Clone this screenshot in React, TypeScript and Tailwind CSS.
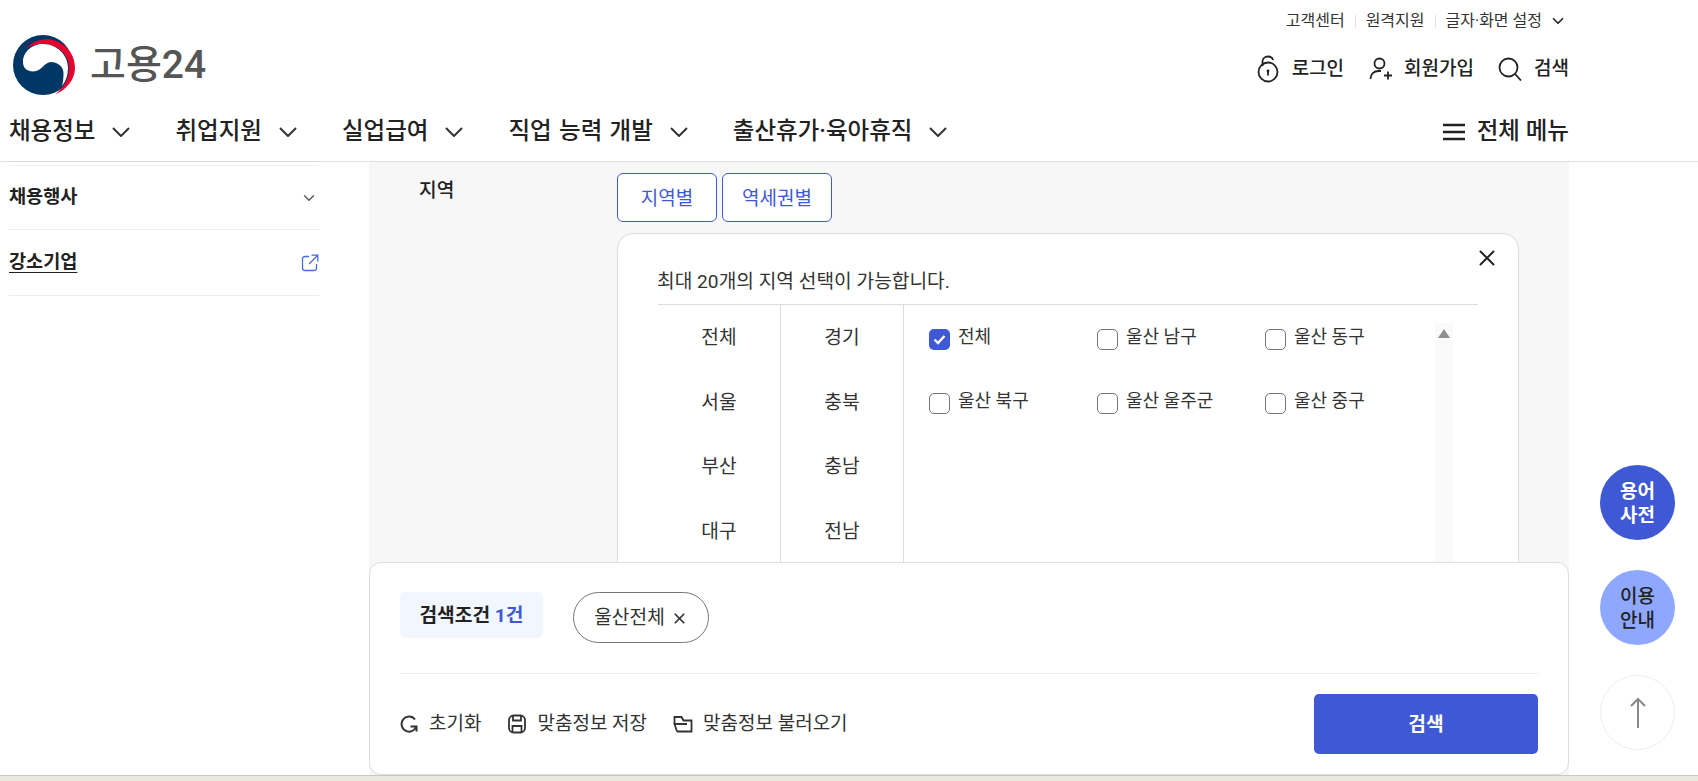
import { ChevronDown, X } from 'lucide-react';

const navItems = ['채용정보', '취업지원', '실업급여', '직업 능력 개발', '출산휴가·육아휴직'];

const regionCols = [
  ['전체', '서울', '부산', '대구'],
  ['경기', '충북', '충남', '전남'],
];

const regionChecks = [
  ['전체', '울산 남구', '울산 동구'],
  ['울산 북구', '울산 울주군', '울산 중구'],
];

const Logo = () => (
  <svg width="63" height="60" viewBox="0 0 63 60">
    <circle cx="30" cy="30" r="30" fill="#003764" />
    <path
      d="M11 16C17 8 26 4 34 4C50 5 62 17 62 33C62 45 53 55 42 59.5C52 52 56 42 56 33C56 20 45 9 30 9C22 9 15 11 11 16Z"
      fill="#e4032e"
    />
    <path
      d="M10 27C10 16 20 9 30 9C44 9 55 20 55 33C55 40 53 46 49 51C50 47 50.5 43 50.5 38C50.5 31 44 27 38 27C31 27 30 36 20 36.5C14 36.5 10 33 10 27Z"
      fill="#fff"
    />
  </svg>
);

const Checkbox = ({ checked }: { checked: boolean }) =>
  checked ? (
    <span className="flex h-[21px] w-[21px] shrink-0 items-center justify-center rounded-[5px] bg-[#3f59d4]">
      <svg width="13" height="11" viewBox="0 0 13 11" fill="none" stroke="#fff" strokeWidth="2.4">
        <path d="M1.5 5.5L5 9L11.5 2" />
      </svg>
    </span>
  ) : (
    <span className="h-[21px] w-[21px] shrink-0 rounded-[5px] border border-[#777] bg-white" />
  );

const App = () => {
  return (
    <div className="relative h-[781px] w-full overflow-hidden bg-white font-['Roboto','Noto_Sans_CJK_KR',sans-serif] text-[#222]">
      <header className="h-[162px] border-b border-[#ddd]">
        <div className="flex h-[161px] w-[1569px] flex-col">
          <div className="flex h-[42px] items-center justify-end text-[16px] leading-none text-[#333]">
            <span>고객센터</span>
            <span className="mx-[10px] h-[13px] w-px bg-[#e2e2e2]" />
            <span>원격지원</span>
            <span className="mx-[10px] h-[13px] w-px bg-[#e2e2e2]" />
            <span>글자·화면 설정</span>
            <ChevronDown size={18} strokeWidth={2.2} className="ml-[7px] mr-[2px] text-[#222]" />
          </div>
          <div className="flex h-[62px] items-start justify-between pl-[13px]">
            <div className="-mt-[7px] flex items-center gap-[14px]">
              <Logo />
              <span className="text-[39px] font-medium leading-none text-[#555]">고용24</span>
            </div>
            <div className="flex h-[54px] items-center text-[19px] font-medium">
              <svg width="22" height="28" viewBox="0 0 22 28" fill="none" stroke="#222" strokeWidth="1.8" className="mr-[13px]">
                <path d="M5.5 11V6.5C5.5 3.5 8 1.5 11 1.5C13.5 1.5 15.5 3 16.2 5" />
                <circle cx="11" cy="17" r="9.5" />
                <circle cx="11" cy="16" r="1.4" fill="#222" stroke="none" />
                <path d="M11 16V20.5" />
              </svg>
              <span>로그인</span>
              <svg width="24" height="24" viewBox="0 0 24 24" fill="none" stroke="#222" strokeWidth="1.8" className="ml-[25px] mr-[11px]">
                <circle cx="10.5" cy="6.5" r="5" />
                <path d="M1.5 22C1.5 17 5 14 9.5 14H12" />
                <path d="M15 18.5H23M19 14.5V22.5" />
              </svg>
              <span>회원가입</span>
              <svg width="24" height="24" viewBox="0 0 24 24" fill="none" stroke="#222" strokeWidth="1.8" className="ml-[24px] mr-[12px]">
                <circle cx="10.5" cy="10.5" r="9" />
                <path d="M17 17L23 23.5" />
              </svg>
              <span>검색</span>
            </div>
          </div>
          <div className="flex h-[55px] items-center justify-between pl-[9px]">
            <nav className="flex items-center gap-[45px]">
              {navItems.map((item) => (
                <div key={item} className="flex items-center gap-[17px]">
                  <span className="text-[23.5px] font-medium leading-none [word-spacing:1.5px]">{item}</span>
                  <svg width="18" height="10" viewBox="0 0 18 10" fill="none" stroke="#333" strokeWidth="2">
                    <path d="M1 1L9 9L17 1" />
                  </svg>
                </div>
              ))}
            </nav>
            <div className="flex items-center gap-[12px]">
              <svg width="22" height="18" viewBox="0 0 22 18" stroke="#222" strokeWidth="2.4">
                <path d="M0 2H22M0 9H22M0 16H22" />
              </svg>
              <span className="text-[23.5px] font-medium leading-none">전체 메뉴</span>
            </div>
          </div>
        </div>
      </header>

      <main className="flex h-[619px] w-[1569px]">
        <aside className="w-[369px] pl-[9px] pr-[50px] pt-[3px]">
          <div className="box-content flex h-[63px] items-center justify-between border-y border-[#eee] pr-[1px]">
            <span className="text-[18.6px] font-bold">채용행사</span>
            <ChevronDown size={18} strokeWidth={1.8} className="text-[#555]" />
          </div>
          <div className="flex h-[66px] items-center justify-between border-b border-[#eee]">
            <span className="pt-[1px] text-[18.6px] font-bold underline underline-offset-4">강소기업</span>
            <svg width="18" height="18" viewBox="0 0 18 18" fill="none" stroke="#4a67e8" strokeWidth="1.3">
              <path d="M8 2.5H4A2.5 2.5 0 0 0 1.5 5V14A2.5 2.5 0 0 0 4 16.5H13A2.5 2.5 0 0 0 15.5 14V10" />
              <path d="M8 10L16.5 1.5M10.5 1.2H16.8V7.5" />
            </svg>
          </div>
        </aside>
        <section className="flex flex-1 bg-[#f7f7f7]">
          <div className="w-[248px] pl-[50px] pt-[16px] text-[19.2px] font-medium leading-[26px]">지역</div>
          <div className="w-[902px] pt-[11px]">
            <div className="flex gap-[5px]">
              <button className="h-[49px] w-[100px] rounded-[6px] border border-[#3f59d4] bg-white pt-[3px] text-[19px] text-[#3f59d4]">
                지역별
              </button>
              <button className="h-[49px] w-[110px] rounded-[6px] border border-[#3f59d4] bg-white pt-[3px] text-[19px] text-[#3f59d4]">
                역세권별
              </button>
            </div>
            <div className="relative mt-[11px] h-[600px] rounded-[16px] border border-[#ddd] bg-white pl-[40px] pr-[40px] pt-[34px]">
              <X size={26} strokeWidth={1.8} className="absolute right-[18px] top-[11px] text-[#222]" />
              <p className="-ml-px h-[28px] text-[19.2px] leading-[28px] text-[#333]">최대 20개의 지역 선택이 가능합니다.</p>
              <div className="mt-[8px] flex border-t border-[#ddd]">
                {regionCols.map((col, i) => (
                  <ul key={i} className="w-[123px] border-r border-[#ddd] pt-[20px] text-center text-[19.2px] leading-[26px] text-[#333]">
                    {col.map((name) => (
                      <li key={name} className="mb-[38.5px]">
                        {name}
                      </li>
                    ))}
                  </ul>
                ))}
                <div className="flex-1 pl-[25px] pt-[24px]">
                  {regionChecks.map((row, i) => (
                    <div key={i} className="mb-[43px] flex">
                      {row.map((name, j) => (
                        <label key={name} className="flex w-[168px] items-start gap-[8px] text-[18px] leading-[20px] text-[#333]">
                          <Checkbox checked={i === 0 && j === 0} />
                          <span className="-mt-[2px]">{name}</span>
                        </label>
                      ))}
                    </div>
                  ))}
                </div>
                <div className="mr-[25px] mt-[18px] flex h-[300px] w-[18px] justify-center bg-[#fafafa] pt-[6px]">
                  <span className="h-0 w-0 border-x-[6.5px] border-b-[9px] border-x-transparent border-b-[#8f8f8f]" />
                </div>
              </div>
            </div>
          </div>
        </section>
      </main>

      {/* 하단 고정 검색 바 */}
      <div className="absolute left-[369px] top-[562px] h-[213px] w-[1200px] rounded-[12px] border border-[#ddd] bg-white px-[30px] pt-[29px]">
        <div className="flex h-[82px] items-start gap-[30px] border-b border-[#eee]">
          <div className="flex h-[46px] w-[143px] items-center justify-center rounded-[6px] bg-[#f2f6fe] pt-[3px] text-[19.2px] font-bold">
            검색조건&nbsp;<span className="text-[#3f59d4]">1건</span>
          </div>
          <div className="flex h-[51px] w-[136px] items-center justify-center gap-[6px] rounded-full border border-[#777] pt-[2px] text-[19.2px] text-[#333]">
            울산전체
            <X size={17} strokeWidth={2.4} />
          </div>
        </div>
        <div className="flex items-center justify-between pt-[20px]">
          <div className="flex items-center text-[19px] text-[#333]">
            <svg width="18" height="18" viewBox="0 0 18 18" fill="none" stroke="#333" strokeWidth="2" className="mr-[11px]">
              <path d="M15 4.5A7.5 7.5 0 1 0 16.2 11.5" />
              <path d="M10.5 11.5H16.5V16.5" />
            </svg>
            <span className="pt-[1px]">초기화</span>
            <svg width="20" height="20" viewBox="0 0 20 20" fill="none" stroke="#333" strokeWidth="1.8" className="ml-[26px] mr-[10px]">
              <rect x="2" y="1.5" width="16" height="17" rx="4.5" />
              <path d="M6 2V6.5H14V2M5.5 18V12H14.5V18" />
            </svg>
            <span className="pt-[1px]">맞춤정보 저장</span>
            <svg width="20" height="18" viewBox="0 0 20 18" fill="none" stroke="#333" strokeWidth="1.8" className="ml-[26px] mr-[10px]">
              <path d="M4 16.5H18.5V5.5H10.5L8.5 2H1.5V9M4 16.5L1.5 9H14" />
            </svg>
            <span className="pt-[1px]">맞춤정보 불러오기</span>
          </div>
          <button className="h-[60px] w-[224px] rounded-[5px] bg-[#3f59d4] pt-[2px] text-[19.2px] font-bold text-white">검색</button>
        </div>
      </div>

      {/* 우측 플로팅 버튼 */}
      <div className="absolute left-[1600px] top-[465px] flex w-[75px] flex-col gap-[30px]">
        <button className="h-[75px] rounded-full bg-[#3f59d4] pt-[2px] text-[19px] font-bold leading-[24px] text-white">
          용어
          <br />
          사전
        </button>
        <button className="h-[75px] rounded-full bg-[#8ea8ff] pt-[2px] text-[19px] font-medium leading-[24px] text-[#222]">
          이용
          <br />
          안내
        </button>
        <button className="flex h-[75px] items-center justify-center rounded-full border border-[#eee] bg-white">
          <svg width="16" height="32" viewBox="0 0 16 32" fill="none" stroke="#888" strokeWidth="2">
            <path d="M8 31V2M1 9L8 2L15 9" />
          </svg>
        </button>
      </div>

      {/* 아래쪽 창 테두리 */}
      <div className="absolute inset-x-0 top-[775px] h-[6px] border-t border-[#c8c8c8] bg-[#e8e8dc]" />
    </div>
  );
};

export default App;
